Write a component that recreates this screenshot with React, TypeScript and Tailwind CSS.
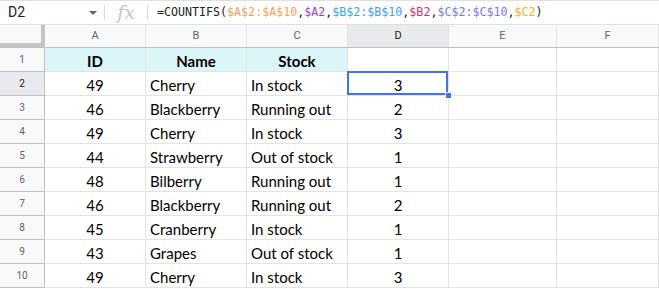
import React from 'react';
import { clsx } from 'clsx';

const cols = [
  { key: 'A', w: 'w-[101px]' },
  { key: 'B', w: 'w-[101px]' },
  { key: 'C', w: 'w-[101px]' },
  { key: 'D', w: 'w-[101px]' },
  { key: 'E', w: 'w-[108px]' },
  { key: 'F', w: 'w-[102px]' },
];

const rows: (string | number)[][] = [
  ['ID', 'Name', 'Stock', ''],
  [49, 'Cherry', 'In stock', 3],
  [46, 'Blackberry', 'Running out', 2],
  [49, 'Cherry', 'In stock', 3],
  [44, 'Strawberry', 'Out of stock', 1],
  [48, 'Bilberry', 'Running out', 1],
  [46, 'Blackberry', 'Running out', 2],
  [45, 'Cranberry', 'In stock', 1],
  [43, 'Grapes', 'Out of stock', 1],
  [49, 'Cherry', 'In stock', 3],
];

// formula pieces with their range colours
const formula: [string, string][] = [
  ['=COUNTIFS(', 'text-[#202124]'],
  ['$A$2:$A$10', 'text-[#f6a15c]'],
  [',', 'text-[#202124]'],
  ['$A2', 'text-[#9b46b6]'],
  [',', 'text-[#202124]'],
  ['$B$2:$B$10', 'text-[#3aa6e4]'],
  [',', 'text-[#202124]'],
  ['$B2', 'text-[#c43b6c]'],
  [',', 'text-[#202124]'],
  ['$C$2:$C$10', 'text-[#737cf0]'],
  [',', 'text-[#202124]'],
  ['$C2', 'text-[#f4ae2a]'],
  [')', 'text-[#202124]'],
];

const FormulaBar = () => (
  <div className="flex h-[25px] items-center border-y border-[#e0e0e0] bg-white">
    <div className="flex w-[104px] items-center justify-between pl-[8px] pr-[7px] font-['Roboto',sans-serif] text-[14px] text-[#202124]">
      <span>D2</span>
      <svg width="8" height="4" viewBox="0 0 8 4" className="mt-[1px]">
        <path d="M0 0h8L4 4z" fill="#5f6368" />
      </svg>
    </div>
    <div className="h-[15px] w-px bg-[#dadce0]" />
    <div className="flex w-[42px] items-center justify-center font-['DejaVu_Serif',serif] text-[19px] italic text-[#c4c4c4]">
      fx
    </div>
    <div className="h-[15px] w-px bg-[#dadce0]" />
    <div className="pl-[9px] font-['DejaVu_Sans_Mono',monospace] text-[11.65px]">
      {formula.map(([t, c], i) => (
        <span key={i} className={c}>{t}</span>
      ))}
    </div>
  </div>
);

const HeaderRow = () => (
  <div className="flex h-[23px] border-b border-[#c0c0c0] bg-[#f8f9fa]">
    <div className="w-[45px] shrink-0 border-r-4 border-b-4 border-[#c4c4c4] bg-[#f8f9fa]" />
    {cols.map((c) => (
      <div
        key={c.key}
        className={clsx(
          c.w,
          'flex shrink-0 items-center justify-center border-r border-[#e2e3e3] pt-[1px] font-["Roboto",sans-serif] text-[11px]',
          c.key === 'D' ? 'bg-[#e8eaed] text-[#202124]' : 'text-[#5f6368]'
        )}
      >
        {c.key}
      </div>
    ))}
  </div>
);

export default function App() {
  return (
    <div className="h-[289px] w-[659px] overflow-hidden bg-white">
      <FormulaBar />
      <HeaderRow />
      {rows.map((r, ri) => {
        const rowNum = ri + 1;
        const isHead = ri === 0;
        return (
          <div key={ri} className="flex h-6">
            <div
              className={clsx(
                'flex w-[45px] shrink-0 items-center justify-center border-r border-b border-[#c0c0c0] font-["Roboto",sans-serif] text-[10px]',
                rowNum === 2 ? 'bg-[#e8eaed] text-[#202124]' : 'bg-[#f8f9fa] text-[#5f6368]'
              )}
            >
              {rowNum}
            </div>
            {cols.map((c, ci) => {
              const v = ci < 4 ? r[ci] : '';
              const center = isHead || ci === 0 || ci === 3;
              const selected = rowNum === 2 && c.key === 'D';
              return (
                <div
                  key={c.key}
                  className={clsx(
                    c.w,
                    'relative flex shrink-0 items-center whitespace-nowrap border-r border-b border-[#e2e3e3] pt-[3px] font-["Lato",sans-serif] text-[15px] text-black',
                    center ? 'justify-center' : 'justify-start pl-[4px]',
                    isHead && ci < 3 && 'bg-[#dcf5f8] font-bold'
                  )}
                >
                  {v}
                  {selected && (
                    <>
                      <div className="absolute -left-px -top-px right-0 bottom-0 z-10 border-2 border-[#3b78e7]" />
                      <div className="absolute -right-[4px] -bottom-[4px] z-10 h-[7px] w-[7px] border border-white bg-[#3b78e7]" />
                    </>
                  )}
                </div>
              );
            })}
          </div>
        );
      })}
    </div>
  );
}
